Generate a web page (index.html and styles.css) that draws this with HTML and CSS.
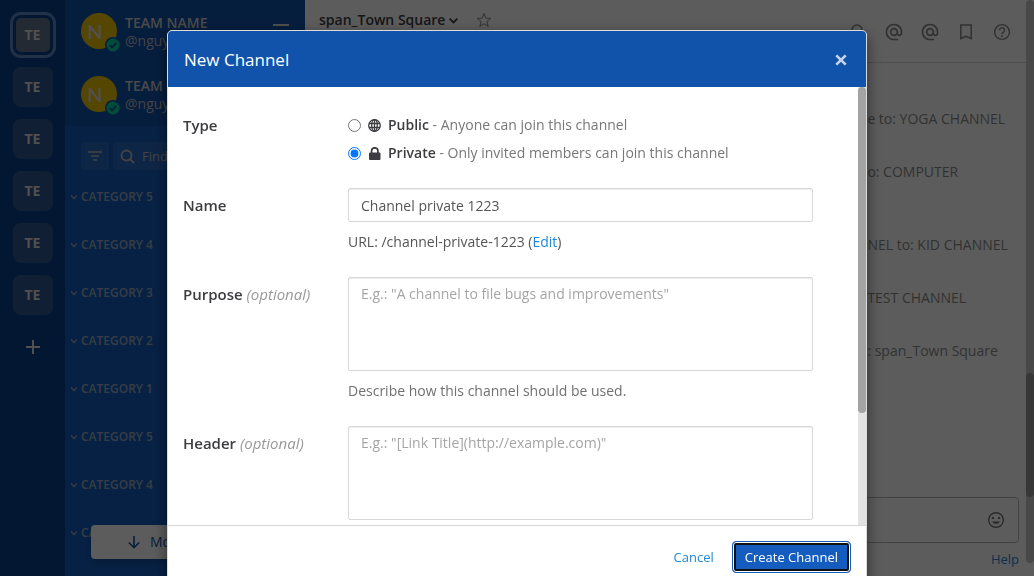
FILE: index.html
```html
<!DOCTYPE html>
<html lang="en">
<head>
<meta charset="utf-8">
<title>New Channel</title>
<link rel="stylesheet" href="styles.css">
</head>
<body>
<svg class="defs" aria-hidden="true">
  <symbol id="chevron" viewBox="0 0 10 10"><path d="M2 3.500l3 3 3-3" fill="none" stroke="currentColor" stroke-width="1.300"/></symbol>
  <symbol id="at" viewBox="0 0 24 24"><path d="M12 15c.8 0 1.500-.3 2.100-.9.6-.6.9-1.300.9-2.100s-.3-1.500-.9-2.100C13.500 9.300 12.800 9 12 9s-1.500.3-2.100.9C9.300 10.500 9 11.200 9 12s.3 1.500.9 2.100c.6.6 1.300.9 2.100.9m0-13c2.800 0 5.100 1 7.100 2.900S22 9.300 22 12v1.500c0 1-.4 1.800-1 2.500-.7.7-1.500 1-2.500 1-1.200 0-2.100-.5-2.700-1.500-1.100 1-2.300 1.500-3.800 1.500-1.400 0-2.500-.5-3.500-1.500S7 13.400 7 12s.5-2.500 1.500-3.500S10.600 7 12 7s2.500.5 3.500 1.500 1.500 2.100 1.500 3.500v1.500c0 .4.200.7.500 1s.6.500 1 .5.700-.2 1-.5.500-.6.500-1V12c0-2.200-.8-4-2.400-5.600S14.200 4 12 4s-4 .8-5.600 2.400S4 9.800 4 12s.8 4 2.400 5.600S9.800 20 12 20h5v2h-5c-2.800 0-5.100-1-7.100-2.900S2 14.800 2 12s1-5.100 2.900-7.100S9.300 2 12 2z" fill="currentColor"/></symbol>
  <symbol id="online" viewBox="0 0 16 16"><circle class="status-ring" cx="8" cy="8" r="8"/><circle class="status-dot" cx="8" cy="8" r="6.500"/><path class="status-tick" d="M4.800 8.200l2.200 2.200 4.300-4.400" fill="none" stroke-width="1.800"/></symbol>
</svg>

<div class="app">
  <nav class="rail" aria-label="Teams">
    <button class="team team-active">TE</button>
    <button class="team">TE</button>
    <button class="team">TE</button>
    <button class="team">TE</button>
    <button class="team">TE</button>
    <button class="team">TE</button>
    <button class="team-add" aria-label="Add team"><svg width="14" height="14" viewBox="0 0 14 14"><path d="M7 0v14M0 7h14" stroke="currentColor" stroke-width="2"/></svg></button>
  </nav>

  <aside class="sidebar">
    <header class="profiles">
      <div class="profile">
        <div class="avatar">N<svg class="status" width="16" height="16"><use href="#online"/></svg></div>
        <div class="who"><strong>TEAM NAME</strong><span>@nguyen</span></div>
        <button class="menu" aria-label="Menu"><svg width="16" height="14" viewBox="0 0 16 14"><path d="M0 1h16M0 7h16M0 13h16" stroke="currentColor" stroke-width="2"/></svg></button>
      </div>
      <div class="profile">
        <div class="avatar">N<svg class="status" width="16" height="16"><use href="#online"/></svg></div>
        <div class="who"><strong>TEAM NAME</strong><span>@nguyen</span></div>
      </div>
    </header>
    <div class="finder">
      <button class="filter" aria-label="Filter"><svg width="14" height="10" viewBox="0 0 14 10"><path d="M0 1h14M3 5h8M5 9h4" stroke="currentColor" stroke-width="1.500"/></svg></button>
      <button class="find"><svg width="15" height="15" viewBox="0 0 15 15"><g fill="none" stroke="currentColor" stroke-width="1.800"><circle cx="6.500" cy="6.500" r="5"/><path d="M10 10l4 4"/></g></svg>Find channel</button>
    </div>
    <div class="categories">
      <button class="category"><svg width="10" height="10"><use href="#chevron"/></svg>CATEGORY 5</button>
      <button class="category"><svg width="10" height="10"><use href="#chevron"/></svg>CATEGORY 4</button>
      <button class="category"><svg width="10" height="10"><use href="#chevron"/></svg>CATEGORY 3</button>
      <button class="category"><svg width="10" height="10"><use href="#chevron"/></svg>CATEGORY 2</button>
      <button class="category"><svg width="10" height="10"><use href="#chevron"/></svg>CATEGORY 1</button>
      <button class="category"><svg width="10" height="10"><use href="#chevron"/></svg>CATEGORY 5</button>
      <button class="category"><svg width="10" height="10"><use href="#chevron"/></svg>CATEGORY 4</button>
      <button class="category"><svg width="10" height="10"><use href="#chevron"/></svg>CATEGORY 3</button>
    </div>
    <button class="more"><svg width="12" height="13" viewBox="0 0 12 13"><path d="M6 0v12M.8 6.500L6 11.700l5.200-5.200" fill="none" stroke="currentColor" stroke-width="1.600"/></svg>More unreads</button>
  </aside>

  <main class="center">
    <header class="channel-bar">
      <div class="channel">
        <button class="channel-name">span_Town Square<svg width="13" height="13"><use href="#chevron"/></svg></button>
        <button class="star" aria-label="Favorite"><svg width="16" height="16" viewBox="0 0 16 16"><path d="M8 1.500l1.800 4.700 5 .2-3.900 3.100 1.300 4.900L8 11.600l-4.200 2.800 1.300-4.900L1.200 6.400l5-.2z" fill="none" stroke="currentColor"/></svg></button>
      </div>
      <div class="tools">
        <button aria-label="Search"><svg width="16" height="16" viewBox="0 0 16 16"><g fill="none" stroke="currentColor" stroke-width="1.500"><circle cx="7" cy="6" r="5"/><path d="M11 10l4 4"/></g></svg></button>
        <button aria-label="Mentions"><svg width="20" height="20"><use href="#at"/></svg></button>
        <button aria-label="Recent mentions"><svg width="20" height="20"><use href="#at"/></svg></button>
        <button aria-label="Saved posts"><svg width="14" height="16" viewBox="0 0 14 16"><path d="M1.800 1h10.400v13.500L7 12.200l-5.200 2.300z" fill="none" stroke="currentColor" stroke-width="1.500"/></svg></button>
        <button aria-label="Help"><svg width="18" height="18" viewBox="0 0 18 18"><g fill="none" stroke="currentColor" stroke-width="1.400"><circle cx="9" cy="9" r="7.400"/><path d="M6.500 7.200a2.500 2.500 0 1 1 3.800 2.100Q9 10 9 11.200M9 12.300v1.600"/></g></svg></button>
      </div>
    </header>
    <div class="posts">
      <p>e to: YOGA CHANNEL</p>
      <p>o: COMPUTER</p>
      <p class="new-day">NEL to: KID CHANNEL</p>
      <p>TEST CHANNEL</p>
      <p>: span_Town Square</p>
    </div>
    <footer class="composer">
      <div class="message-box">
        <button aria-label="Emoji"><svg width="18" height="18" viewBox="0 0 18 18"><circle cx="9" cy="9" r="7.300" fill="none" stroke="currentColor" stroke-width="1.400"/><path d="M5 6h2v2H5zM11 6h2v2h-2zM5 10.500h8a4.200 3.500 0 0 1-8 0z" fill="currentColor"/></svg></button>
      </div>
      <a class="help" href="#help">Help</a>
    </footer>
  </main>
  <div class="page-scroll" aria-hidden="true"><div class="page-thumb"></div></div>
</div>

<div class="backdrop">
  <form class="modal" role="dialog" aria-labelledby="modal-title">
    <header class="modal-head">
      <h1 id="modal-title">New Channel</h1>
      <button type="button" class="close" aria-label="Close"><svg width="12" height="12" viewBox="0 0 12 12"><path d="M1.300 1.300l9.400 9.400M10.700 1.300l-9.400 9.400" stroke="currentColor" stroke-width="2.600"/></svg></button>
    </header>
    <div class="modal-body">
      <div class="fields">
        <div class="field" role="radiogroup" aria-labelledby="type-label">
          <span class="label" id="type-label">Type</span>
          <div class="options">
            <label class="option"><input type="radio" name="type"><svg width="13" height="13" viewBox="0 0 13 13"><g fill="none" stroke="currentColor" stroke-width="1.300"><circle cx="6.500" cy="6.500" r="5.800"/><ellipse cx="6.500" cy="6.500" rx="2.800" ry="5.800"/><path d="M6.500.7v11.600M1 4.500h11M1 8.500h11"/></g></svg><span><b>Public</b> - Anyone can join this channel</span></label>
            <label class="option"><input type="radio" name="type" checked><svg width="13" height="13" viewBox="0 0 13 13"><rect x="1" y="5.500" width="11.500" height="7.500" rx="1" fill="currentColor"/><path d="M3.600 6V3.800a3.150 3 0 0 1 6.300 0V6" fill="none" stroke="currentColor" stroke-width="1.700"/></svg><span><b>Private</b> - Only invited members can join this channel</span></label>
          </div>
        </div>
        <div class="field">
          <label class="label" for="name">Name</label>
          <div class="control">
            <input class="text" id="name" type="text" value="Channel private 1223">
            <p class="url">URL: /channel-private-1223 (<a href="#edit">Edit</a>)</p>
          </div>
        </div>
        <div class="field">
          <label class="label" for="purpose">Purpose <i>(optional)</i></label>
          <div class="control">
            <textarea class="text area" id="purpose" placeholder='E.g.: "A channel to file bugs and improvements"'></textarea>
            <p class="hint">Describe how this channel should be used.</p>
          </div>
        </div>
        <div class="field">
          <label class="label" for="header">Header <i>(optional)</i></label>
          <div class="control">
            <textarea class="text area" id="header" placeholder='E.g.: "[Link Title](http://example.com)"'></textarea>
          </div>
        </div>
      </div>
      <div class="modal-scroll" aria-hidden="true"><div class="modal-thumb"></div></div>
    </div>
    <footer class="modal-foot">
      <button type="button" class="cancel">Cancel</button>
      <button type="submit" class="create">Create Channel</button>
    </footer>
  </form>
</div>
</body>
</html>
```
FILE: styles.css
```css
* { box-sizing: border-box; }
body {
  margin: 0;
  height: 100vh;
  overflow: hidden;
  font: 14px/20px "Open Sans", sans-serif;
  color: #3d3c40;
}
button {
  padding: 0;
  border: 0;
  background: none;
  color: inherit;
  font: inherit;
  display: flex;
  align-items: center;
}
p, h1 { margin: 0; }
a { color: #2389d7; text-decoration: none; }
.defs { display: none; }
.app { display: flex; height: 100%; background: #fff; }

/* Team rail */
.rail {
  flex: 0 0 65px;
  display: flex;
  flex-direction: column;
  align-items: center;
  gap: 12px;
  padding-top: 15px;
  background: #0b428c;
}
.team {
  justify-content: center;
  width: 40px;
  height: 40px;
  border-radius: 8px;
  background: #305890;
  color: #ddd;
  font-weight: 700;
}
.team-active {
  background: #64748f;
  box-shadow: inset 0 0 0 3px #0b428c, 0 0 0 3px #5d89c8;
}
.team-add { justify-content: center; width: 40px; height: 40px; color: #ddd; }

/* Channel sidebar */
.sidebar {
  position: relative;
  flex: 0 0 240px;
  overflow: hidden;
  background: #145dbf;
  color: #bbb;
}
.profiles {
  display: flex;
  flex-direction: column;
  gap: 27px;
  height: 126px;
  padding: 13px 16px;
  background: #1153ab;
}
.profile { display: flex; align-items: center; gap: 8px; height: 36px; }
.avatar {
  position: relative;
  display: flex;
  align-items: center;
  justify-content: center;
  width: 36px;
  height: 36px;
  padding-right: 8px;
  border-radius: 50%;
  background: #efc400;
  color: #ddd;
  font: 600 20px/24px Lato, sans-serif;
}
.status { position: absolute; right: -4px; bottom: -4px; }
.status-ring { fill: #1153ab; }
.status-dot { fill: #06d6a0; }
.status-tick { stroke: #1153ab; }
.who { display: flex; flex: 1; flex-direction: column; padding-top: 2px; line-height: 18px; }
.who strong { color: #ccc; font-weight: 600; }
.menu { height: 40px; color: #ddd; }
.finder { display: flex; gap: 4px; padding: 16px 16px 17px; }
.filter { justify-content: center; width: 28px; height: 28px; border-radius: 4px; background: #2769c0; }
.find { flex: 1; gap: 7px; padding-left: 7px; border-radius: 4px; background: #2769c0; font-size: 13px; }
.categories { display: flex; flex-direction: column; gap: 28px; }
.category { gap: 2px; padding-left: 4px; height: 20px; color: #9ab; font-size: 12px; font-weight: 600; }
.more {
  position: absolute;
  right: 26px;
  bottom: 17px;
  left: 26px;
  justify-content: center;
  gap: 10px;
  height: 34px;
  border-radius: 4px;
  background: #fff;
  color: #1153ab;
  box-shadow: 0 4px 8px #0003;
}

/* Channel view */
.center { flex: 1; display: flex; flex-direction: column; min-width: 0; }
.channel-bar {
  display: flex;
  justify-content: space-between;
  height: 63px;
  padding: 10px 6px 8px 14px;
  border-bottom: 1px solid #d8d8d8;
}
.channel, .tools { display: flex; }
.channel { gap: 16px; align-items: flex-start; }
.channel-name { gap: 2px; font-weight: 600; }
.star { height: 20px; color: #888; }
.tools { align-items: center; color: #888; }
.tools button { justify-content: center; width: 36px; height: 36px; }
.posts {
  flex: 1;
  display: flex;
  flex-direction: column;
  gap: 33px;
  padding: 46px 0 0 78%;
  white-space: nowrap;
  color: #8b8b8b;
}
.new-day { padding-top: 20px; }
.composer { padding: 0 7px 7px 20px; text-align: right; }
.message-box {
  display: flex;
  align-items: center;
  justify-content: flex-end;
  height: 46px;
  margin-bottom: 6px;
  padding-right: 13px;
  border: 1px solid #b8b8b8;
  border-radius: 4px;
  color: #777;
}
.help { font-size: 13px; line-height: 18px; }
.page-scroll { flex: 0 0 8px; height: 97.8%; padding-top: 373px; border-radius: 4px; background: #c8c8c8; }
.page-thumb { height: 124px; border-radius: 4px; background: #999; }

/* Dialog */
.backdrop {
  position: fixed;
  inset: 0;
  display: flex;
  align-items: flex-start;
  justify-content: center;
  padding-top: 30px;
  background: #000000a3;
}
.modal {
  width: 700px;
  max-width: 96%;
  overflow: hidden;
  border: 1px solid #dcdcdc;
  border-radius: 5px;
  background: #fff;
  box-shadow: 0 5px 15px #00000080;
}
.modal-head {
  display: flex;
  align-items: center;
  justify-content: space-between;
  height: 56px;
  padding: 1px 19px 0 16px;
  background: #1153ab;
  color: #fff;
}
.modal-head h1 { font-size: 17px; font-weight: 500; line-height: 24px; }
.close { color: #c4d5eb; }
.modal-body { display: flex; height: 438px; overflow: hidden; }
.fields { flex: 1; display: flex; flex-direction: column; gap: 25px; padding: 28px 45px 0 15px; }
.modal-scroll { flex: 0 0 8px; background: #e3e3e3; }
.modal-thumb { height: 326px; border-radius: 4px; background: #a3a3a3; }
.field { display: grid; grid-template-columns: 165px 1fr; align-items: start; }
.label { padding-top: 7px; font-size: 15px; font-weight: 600; }
.label i { color: #999; font-weight: 400; }
.field:first-child .label { padding-top: 0; }
.options { display: flex; flex-direction: column; gap: 8px; }
.option { display: flex; align-items: center; height: 20px; color: #777; }
.option svg { margin: 0 7px; color: #3d3c40; }
.option b { color: #3d3c40; font-weight: 600; }
.option input { width: 13px; height: 13px; margin: 0; }
.control { display: flex; flex-direction: column; }
.text {
  display: block;
  width: 100%;
  height: 34px;
  padding: 6px 12px;
  border: 1px solid #d8d8d8;
  border-radius: 2px;
  background: #fff;
  color: #555;
  font: inherit;
  box-shadow: inset 0 1px 1px #00000013;
}
.area { height: 94px; resize: none; }
.text::placeholder { color: #a5a5a5; }
.url, .hint { padding-top: 10px; color: #555; }
.hint { color: #707070; }
.modal-foot {
  display: flex;
  align-items: center;
  justify-content: flex-end;
  gap: 18px;
  padding: 15px;
  border-top: 1px solid #d8d8d8;
  font-size: 13px;
}
.cancel { color: #2389d7; }
.create {
  height: 32px;
  padding: 0 12px;
  border: 1px solid #145dbf;
  border-radius: 4px;
  background: #145dbf;
  color: #fff;
  font-weight: 500;
  box-shadow: inset 0 0 0 1px #fff, inset 0 0 0 3px #101010;
}
```
